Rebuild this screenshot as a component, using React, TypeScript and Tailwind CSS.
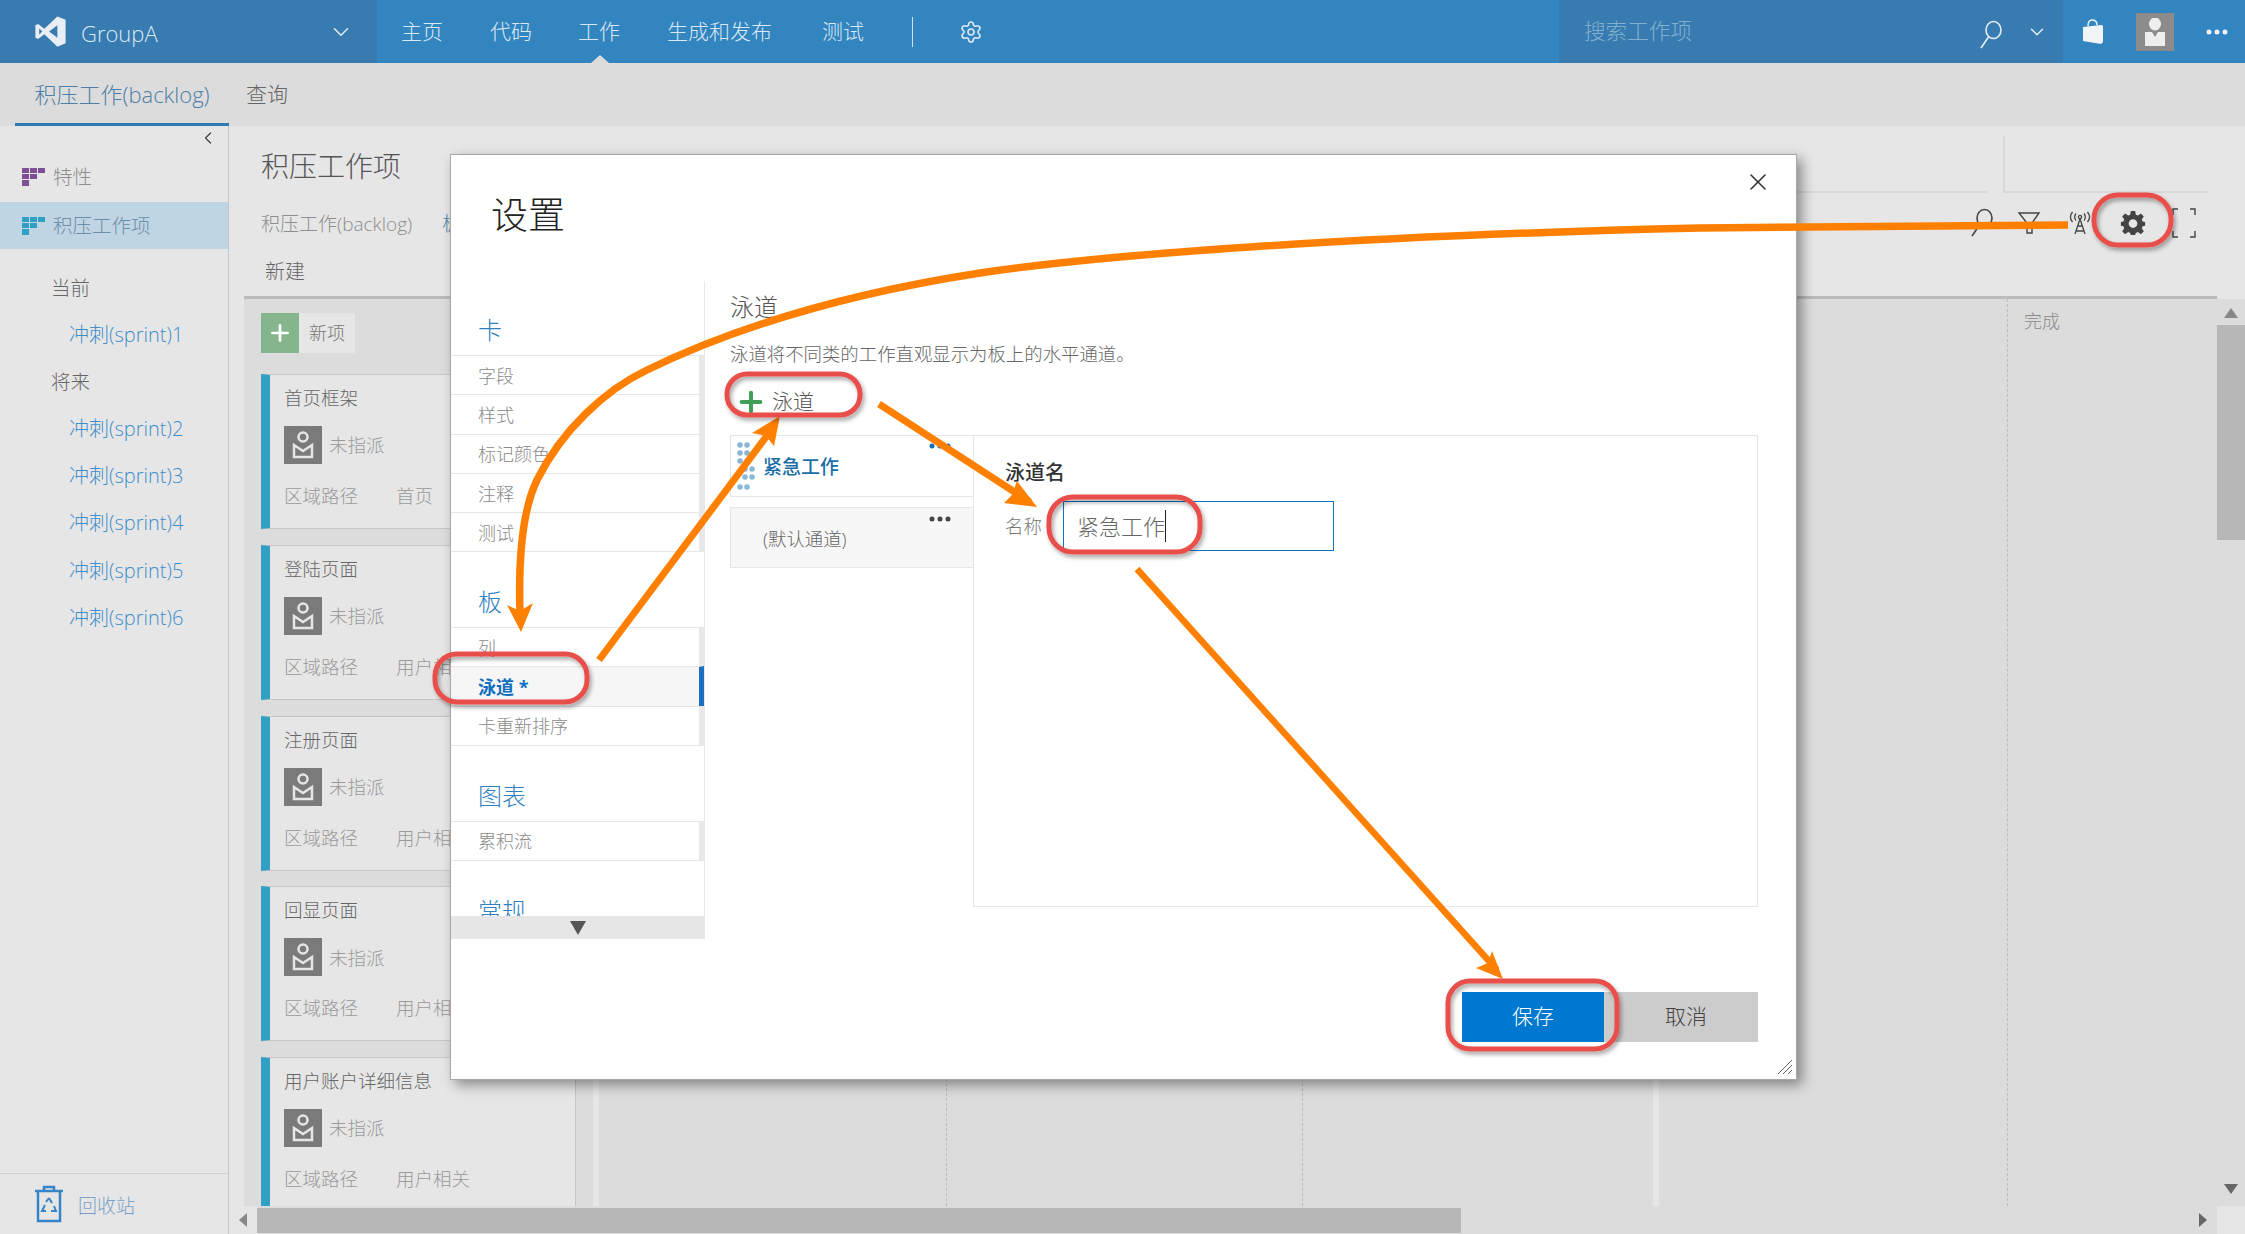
import React from 'react';
import { ChevronDown, ChevronLeft, Settings, Plus, X } from 'lucide-react';

const sprints = ['冲刺(sprint)2', '冲刺(sprint)3', '冲刺(sprint)4', '冲刺(sprint)5', '冲刺(sprint)6'];

const cards = [
  { title: '首页框架', area: '首页' },
  { title: '登陆页面', area: '用户相关' },
  { title: '注册页面', area: '用户相关' },
  { title: '回显页面', area: '用户相关' },
  { title: '用户账户详细信息', area: '用户相关' },
];

const BacklogIcon = ({ color }: { color: string }) => (
  <svg width="24" height="18" viewBox="0 0 24 18" fill={color}>
    <rect x="0" y="0" width="7" height="5" />
    <rect x="8" y="0" width="7" height="5" />
    <rect x="16" y="0" width="7" height="5" />
    <rect x="0" y="6" width="7" height="5" />
    <rect x="8" y="6" width="7" height="5" />
    <rect x="0" y="12" width="7" height="6" />
  </svg>
);

const Dots = ({ color = '#444' }: { color?: string }) => (
  <svg width="22" height="6" viewBox="0 0 22 6" fill={color}>
    <circle cx="3" cy="3" r="2.5" />
    <circle cx="11" cy="3" r="2.5" />
    <circle cx="19" cy="3" r="2.5" />
  </svg>
);

// tall narrow magnifier, ring on top right and handle going down left
const SearchGlyph = ({ color }: { color: string }) => (
  <svg width="24" height="30" viewBox="0 0 24 30" fill="none" stroke={color} strokeWidth="1.6">
    <ellipse cx="14.5" cy="10" rx="7.5" ry="8.5" />
    <path d="M9.5 17 L2 28" />
  </svg>
);

const AntennaGlyph = () => (
  <svg width="22" height="24" viewBox="0 0 22 24" fill="none" stroke="#444" strokeWidth="1.3">
    <circle cx="11" cy="6" r="1.6" />
    <path d="M11 8 L6 23 M11 8 L16 23 M8.5 15 H13.5 M7 20 H15" />
    <path d="M7 2.5 C5.5 4.5 5.5 7.5 7 9.5 M15 2.5 C16.5 4.5 16.5 7.5 15 9.5" />
    <path d="M3.5 1 C1 4 1 8 3.5 11 M18.5 1 C21 4 21 8 18.5 11" />
  </svg>
);

const Card = ({ title, area }: { title: string; area: string }) => (
  <div className="h-[155px] shrink-0 bg-[#e6e6e6] border-l-[9px] border-l-[#30a0c4] border-y border-y-[#c6c6c6] border-r border-r-[#c6c6c6] pl-[14px] pt-[9px]">
    <div className="text-[18.5px] leading-[28px] text-[#666]">{title}</div>
    <div className="flex items-center mt-[14px] gap-[7px]">
      <div className="w-[38px] h-[38px] bg-[#7a7a7a] flex items-center justify-center">
        <svg width="22" height="30" viewBox="0 0 22 30" fill="none" stroke="#e6e6e6" strokeWidth="2.5">
          <circle cx="11" cy="7" r="4.5" />
          <path d="M2 15 L11 21 L20 15 V27 H2 Z" />
        </svg>
      </div>
      <span className="text-[18.5px] text-[#9a9a9a]">未指派</span>
    </div>
    <div className="flex mt-[18px] text-[18.5px] leading-[28px] text-[#9a9a9a]">
      <span className="w-[112px]">区域路径</span>
      <span>{area}</span>
    </div>
  </div>
);

const NavHeading = ({ children, first }: { children: React.ReactNode; first?: boolean }) => (
  <div className={first ? 'h-[74px] flex items-end pb-[10px] pl-[27px] text-[24px] leading-[30px] text-[#2f80bd]' : 'h-[75px] flex items-end pb-[10px] pl-[27px] text-[24px] leading-[30px] text-[#2f80bd]'}>{children}</div>
);

const NavRow = ({ label, active, last }: { label: string; active?: boolean; last?: boolean }) => (
  <div
    className={
      active
        ? 'h-[39.3px] flex items-center pl-[27px] pt-[2px] text-[18px] font-bold text-[#106ebe] bg-[#f6f6f6] border-t border-t-[#e6e6e6] border-r-[5px] border-r-[#1b6ec2]'
        : last
          ? 'h-[40px] flex items-center pl-[27px] pt-[2px] text-[18px] text-[#8a8a8a] border-y border-y-[#e6e6e6] border-r-[5px] border-r-[#e8e8e8]'
          : 'h-[39.3px] flex items-center pl-[27px] pt-[2px] text-[18px] text-[#8a8a8a] border-t border-t-[#e6e6e6] border-r-[5px] border-r-[#e8e8e8]'
    }
  >
    {label}
  </div>
);

const Annotations = () => (
  <svg className="absolute left-0 top-0 pointer-events-none" width="2245" height="1234" viewBox="0 0 2245 1234" fill="none">
    <defs>
      <filter id="ringShadow" x="-20%" y="-20%" width="140%" height="150%">
        <feDropShadow dx="2" dy="3" stdDeviation="2" floodColor="#000" floodOpacity="0.35" />
      </filter>
    </defs>
    <g stroke="#ff8000" strokeLinecap="butt">
      <path
        d="M2068 225 L1700 228 C1350 236 1100 255 980 273 C870 290 750 320 647 370 C605 390 562 430 537 480 C525 505 518 550 520 613"
        strokeWidth="7.5"
      />
      <path d="M599 660 L775 425" strokeWidth="7" />
      <path d="M879 404 L1030 502" strokeWidth="7" />
      <path d="M1137 569 L1497 970" strokeWidth="6.5" />
    </g>
    <g fill="#ff8000">
      <polygon points="521,632 507,605 520,611 533,603" />
      <polygon points="780,416 774,446 766,436 752,433" />
      <polygon points="1037,507 1004,503 1012,495 1017,481" />
      <polygon points="1503,979 1476,968 1488,963 1492,951" />
    </g>
    <g stroke="#e8504c" strokeWidth="5" filter="url(#ringShadow)">
      <rect x="2094" y="195" width="77" height="50" rx="24" />
      <rect x="435" y="654" width="152" height="48" rx="22" />
      <rect x="727" y="374" width="133" height="41" rx="20" />
      <rect x="1049" y="497" width="151" height="55" rx="24" />
      <rect x="1448" y="981" width="169" height="68" rx="22" />
    </g>
  </svg>
);

const SettingsDialog = () => (
  <div className="absolute left-[450px] top-[154px] w-[1347px] h-[926px] bg-white border border-[#a8a8a8] shadow-[5px_5px_12px_rgba(0,0,0,0.4)]">
    <div className="h-[126px] pl-[40px] pt-[35px] text-[37px] leading-[50px] text-[#222]">设置</div>
    <button className="absolute right-[24px] top-[13px] text-[#333]">
      <X size={28} strokeWidth={1.3} />
    </button>
    <div className="flex items-start">
      <div className="w-[254px] shrink-0 border-r border-r-[#e8e8e8]">
        <div className="h-[635px] overflow-hidden">
          <NavHeading first>卡</NavHeading>
          <NavRow label="字段" />
          <NavRow label="样式" />
          <NavRow label="标记颜色" />
          <NavRow label="注释" />
          <NavRow label="测试" last />
          <NavHeading>板</NavHeading>
          <NavRow label="列" />
          <NavRow label="泳道 *" active />
          <NavRow label="卡重新排序" last />
          <NavHeading>图表</NavHeading>
          <NavRow label="累积流" last />
          <NavHeading>常规</NavHeading>
        </div>
        <div className="h-[23px] bg-[#e6e6e6] flex justify-center items-center">
          <svg width="16" height="14" viewBox="0 0 16 14" fill="#555">
            <polygon points="0,0 16,0 8,14" />
          </svg>
        </div>
      </div>
      <div className="flex-1 pl-[25px] pr-[38px]">
        <div className="pt-[11px] text-[24px] leading-[30px] text-[#555]">泳道</div>
        <div className="mt-[20px] text-[18.4px] leading-[24px] text-[#666]">泳道将不同类的工作直观显示为板上的水平通道。</div>
        <div className="mt-[21px] h-[30px] flex items-center pl-[5px] gap-[5px] text-[21px] text-[#555]">
          <Plus size={32} strokeWidth={3} className="text-[#3f9e58]" />
          泳道
        </div>
        <div className="mt-[18px] flex">
          <div className="w-[243px] shrink-0">
            <div className="relative h-[62px] border-y border-l border-[#e6e6e6] flex items-center pl-[32px] pt-[3px] text-[19px] font-medium text-[#1a6ea8]">
              <svg className="absolute left-[6px] top-[6px]" width="18" height="50" viewBox="0 0 18 50" fill="#8ab8d8">
                <circle cx="3" cy="3" r="2.8" /><circle cx="10" cy="3" r="2.8" />
                <circle cx="3" cy="11" r="2.8" /><circle cx="10" cy="11" r="2.8" />
                <circle cx="3" cy="19" r="2.8" /><circle cx="10" cy="19" r="2.8" />
                <circle cx="8" cy="27" r="2.8" /><circle cx="15" cy="27" r="2.8" />
                <circle cx="8" cy="35" r="2.8" /><circle cx="15" cy="35" r="2.8" />
                <circle cx="3" cy="45" r="2.8" /><circle cx="10" cy="45" r="2.8" />
              </svg>
              紧急工作
              <span className="absolute right-[22px] top-[7px]"><Dots color="#106ebe" /></span>
            </div>
            <div className="relative mt-[10px] h-[61px] bg-[#f7f7f7] border-y border-l border-[#e6e6e6] flex items-center pl-[32px] pt-[2px] text-[18.4px] text-[#666]">
              (默认通道)
              <span className="absolute right-[22px] top-[8px]"><Dots /></span>
            </div>
          </div>
          <div className="w-[785px] h-[472px] border border-[#e6e6e6] pl-[31px] pt-[22px]">
            <div className="text-[20px] leading-[30px] font-medium text-[#333]">泳道名</div>
            <div className="mt-[13px] flex items-center">
              <span className="w-[58px] text-[18.4px] text-[#777]">名称</span>
              <div className="w-[271px] h-[50px] border border-[#0f74bd] pl-[13px] flex items-center text-[22px] text-[#666]">
                紧急工作
                <span className="w-px h-[32px] bg-[#222]" />
              </div>
            </div>
          </div>
        </div>
        <div className="mt-[85px] flex justify-end">
          <button className="w-[142px] h-[50px] bg-[#0078d0] text-white text-[21px]">保存</button>
          <button className="w-[154px] h-[50px] pl-[10px] bg-[#cccccc] text-[#444] text-[21px]">取消</button>
        </div>
      </div>
    </div>
    <svg className="absolute right-[3px] bottom-[4px]" width="16" height="16" viewBox="0 0 16 16" stroke="#666" strokeWidth="1">
      <path d="M1 15 L15 1 M6 15 L15 6 M11 15 L15 11" />
    </svg>
  </div>
);

export default function App() {
  return (
    <div className="relative w-[2245px] h-[1234px] overflow-hidden bg-[#e6e6e6] font-light font-['Open_Sans','Noto_Sans_CJK_SC',sans-serif]">
      {/* Top bar */}
      <div className="h-[63px] flex bg-[#3385c0] text-[#dbe9f4]">
        <div className="w-[377px] shrink-0 bg-[#377bb0] flex items-center pl-[34px]">
          <svg width="33" height="33" viewBox="0 0 24 24" fill="#e8eef3">
            <path d="M17 1 L23 3.5 V20.5 L17 23 L7.5 14 L3 17.5 L1 16.5 V7.5 L3 6.5 L7.5 10 Z M17 7.5 L11 12 L17 16.5 Z M3.8 9.8 V14.2 L6 12 Z" fillRule="evenodd" />
          </svg>
          <span className="ml-[14px] pt-[3px] text-[22px]">GroupA</span>
          <ChevronDown size={26} strokeWidth={1.5} className="ml-auto mr-[23px]" />
        </div>
        <nav className="flex items-center pl-[24px] text-[21px]">
          <span className="w-[89px]">主页</span>
          <span className="w-[88px]">代码</span>
          <span className="relative w-[89px] h-full flex items-center">
            工作
            <span className="absolute left-[13px] bottom-0 w-0 h-0 border-x-[9px] border-x-transparent border-b-[8px] border-b-[#dcdcdc]" />
          </span>
          <span className="w-[155px]">生成和发布</span>
          <span className="w-[90px]">测试</span>
          <span className="w-px h-[30px] bg-[#cfe2f0]" />
          <Settings size={24} strokeWidth={1.6} className="ml-[46px]" />
        </nav>
        <div className="ml-auto w-[504px] bg-[#377bb0] flex items-center pl-[25px] text-[21.6px] text-[#84b0cf]">
          搜索工作项
          <span className="ml-auto pt-[6px]"><SearchGlyph color="#e8eef3" /></span>
          <ChevronDown size={22} strokeWidth={1.6} className="ml-[23px] mr-[15px] text-[#e8eef3]" />
        </div>
        <div className="w-[182px] flex items-center pl-[18px]">
          <svg width="24" height="26" viewBox="0 0 24 26" fill="#f0f4f7">
            <path d="M2 8 L20 6 C22 6 22 7 22 9 V23 L20 25 L2 22 Z" />
            <path d="M7 7 C7 2 9 1 11 1 C13 1 16 2 16 6" fill="none" stroke="#f0f4f7" strokeWidth="1.5" />
          </svg>
          <div className="ml-[31px] w-[38px] h-[38px] bg-[#8c8c8c] flex justify-center pt-[5px]">
            <svg width="22" height="28" viewBox="0 0 22 28" fill="#eee">
              <ellipse cx="11" cy="6" rx="6" ry="6.5" />
              <path d="M1 14 H8 L11 19 L14 14 H21 V28 H1 Z" />
            </svg>
          </div>
          <span className="ml-[32px]"><Dots color="#f0f4f7" /></span>
        </div>
      </div>

      {/* Sub nav */}
      <div className="h-[63px] flex bg-[#dcdcdc] text-[21px]">
        <div className="ml-[15px] w-[214px] h-full pt-[3px] border-b-[3px] border-b-[#2d7ab0] flex items-center justify-center text-[22px] text-[#4d7fa8]">
          积压工作(backlog)
        </div>
        <div className="ml-[17px] flex items-center text-[#666]">查询</div>
      </div>

      <div className="flex h-[1108px]">
        {/* Left rail */}
        <aside className="w-[229px] shrink-0 border-r border-r-[#c6c6c6] flex flex-col">
          <div className="h-[24px] flex justify-end items-center pr-[10px] text-[#444]">
            <ChevronLeft size={20} strokeWidth={1.5} />
          </div>
          <div className="mt-[2px] h-[50px] flex items-center pl-[22px] gap-[7px] text-[19.5px] text-[#8e8e8e]">
            <BacklogIcon color="#7d4f94" />
            特性
          </div>
          <div className="h-[47px] flex items-center pl-[22px] gap-[7px] text-[19.5px] text-[#6b8eaa] bg-[#c0d5e3]">
            <BacklogIcon color="#2f9fc4" />
            积压工作项
          </div>
          <div className="mt-[15px] h-[47px] flex items-center pl-[51px] text-[19.5px] text-[#666]">当前</div>
          <div className="h-[47px] flex items-center pl-[69px] text-[20px] text-[#3f8ecb]">冲刺(sprint)1</div>
          <div className="h-[47px] flex items-center pl-[51px] text-[19.5px] text-[#666]">将来</div>
          {sprints.map((s) => (
            <div key={s} className="h-[47.3px] flex items-center pl-[69px] text-[20px] text-[#3f8ecb]">{s}</div>
          ))}
          <div className="mt-auto h-[61px] border-t border-t-[#d0d0d0] flex items-center pl-[34px] gap-[14px] text-[19px] text-[#7a9fc8]">
            <svg width="30" height="38" viewBox="0 0 30 38" fill="none" stroke="#3585c8" strokeWidth="2.5">
              <path d="M1 6 H29 M10 6 V2 H20 V6 M4 6 V36 H26 V6" />
              <path d="M15 13 L18 18 M20 21 L22 26 H17 M12 26 H8 L11 20 M12 17 L15 13" strokeWidth="2" />
            </svg>
            <span className="pt-[4px]">回收站</span>
          </div>
        </aside>

        <main className="flex-1 flex flex-col min-w-0">
          {/* Page header */}
          <div className="relative h-[170px] pl-[32px] pt-[22px] shrink-0">
            <div className="text-[28px] leading-[36px] text-[#555]">积压工作项</div>
            <div className="mt-[27px] flex text-[19px] leading-[26px] text-[#8e8e8e]">
              积压工作(backlog)
              <span className="ml-[30px] text-[#4d7fa8]">板</span>
            </div>
            <div className="mt-[22px] pl-[4px] text-[20px] leading-[26px] text-[#666]">新建</div>
            <div className="absolute left-[1774px] top-[10px] w-[205px] h-[57px] border-l-2 border-b-2 border-[#d8d8d8]" />
            <div className="absolute left-[1500px] top-[65px] w-[258px] h-[2px] bg-[#d8d8d8]" />
            <div className="absolute left-[1741px] top-[82px] flex items-center text-[#444]">
              <SearchGlyph color="#444" />
              <svg className="ml-[23px]" width="24" height="24" viewBox="0 0 24 24" fill="none" stroke="#444" strokeWidth="1.4">
                <path d="M2 2 H22 L15 12 V22 H10 V12 Z" />
              </svg>
              <span className="ml-[28px]"><AntennaGlyph /></span>
              <svg className="ml-[29px]" width="26" height="26" viewBox="0 0 24 24" fill="#444">
                <path d="M10 1 H14 L14.6 4.3 L16.5 5.1 L19.3 3.2 L22 6 L20.1 8.7 L20.9 10.6 L23.2 11 V14.6 L20.9 15 L20.1 16.9 L22 19.6 L19.3 22.3 L16.5 20.4 L14.6 21.2 L14 23 H10 L9.4 21.2 L7.5 20.4 L4.7 22.3 L2 19.6 L3.9 16.9 L3.1 15 L0.8 14.6 V11 L3.1 10.6 L3.9 8.7 L2 6 L4.7 3.2 L7.5 5.1 L9.4 4.3 Z M12 8.5 A4 4 0 1 0 12 16.5 A4 4 0 1 0 12 8.5 Z" fillRule="evenodd" />
              </svg>
              <svg className="ml-[26px]" width="24" height="30" viewBox="0 0 24 30" fill="none" stroke="#444" strokeWidth="1.4">
                <path d="M6 1 H1 V7 M18 1 H23 V7 M1 23 V29 H6 M23 23 V29 H18" />
              </svg>
            </div>
          </div>

          <div className="flex-1 flex min-h-0">
            {/* Board */}
            <div className="ml-[15px] flex-1 flex bg-[#dcdcdc] border-t-[3px] border-t-[#bbbbbb] min-w-0 overflow-hidden">
              <div className="w-[332px] shrink-0 pl-[17px] pt-[14px] flex flex-col">
                <div className="w-[94px] h-[40px] shrink-0 flex bg-[#e6e6e6]">
                  <div className="w-[38px] bg-[#84b58c] flex items-center justify-center text-white">
                    <Plus size={26} strokeWidth={2.5} />
                  </div>
                  <span className="pl-[10px] text-[18px] leading-[40px] text-[#777]">新项</span>
                </div>
                <div className="mt-[21px] flex flex-col gap-[15.8px]">
                  {cards.map((c) => (
                    <Card key={c.title} title={c.title} area={c.area} />
                  ))}
                </div>
              </div>
              <div className="w-[17px] shrink-0" />
              <div className="w-[6px] shrink-0 bg-[#e6e6e6]" />
              <div className="w-[348px] shrink-0 border-r border-dashed border-r-[#bdbdbd]" />
              <div className="w-[356px] shrink-0 border-r border-dashed border-r-[#bdbdbd]" />
              <div className="w-[350px] shrink-0" />
              <div className="w-[6px] shrink-0 bg-[#e6e6e6]" />
              <div className="w-[349px] shrink-0 border-r border-dashed border-r-[#bdbdbd]" />
              <div className="flex-1 pl-[16px] pt-[9px] text-[18px] leading-[26px] text-[#8a8a8a]">完成</div>
            </div>
            {/* Vertical scrollbar */}
            <div className="w-[28px] shrink-0 bg-[#dcdcdc] border-t-[3px] border-t-[#e6e6e6] flex flex-col items-center">
              <svg className="mt-[9px]" width="14" height="10" viewBox="0 0 14 10" fill="#888"><polygon points="7,0 14,10 0,10" /></svg>
              <div className="mt-[7px] w-full h-[215px] bg-[#b7b7b7]" />
              <svg className="mt-auto mb-[12px]" width="14" height="10" viewBox="0 0 14 10" fill="#666"><polygon points="0,0 14,0 7,10" /></svg>
            </div>
          </div>

          {/* Horizontal scrollbar */}
          <div className="h-[28px] shrink-0 flex items-center bg-[#dcdcdc]">
            <div className="w-[28px] h-full bg-[#e6e6e6] flex items-center justify-center">
              <svg width="8" height="14" viewBox="0 0 8 14" fill="#888"><polygon points="8,0 8,14 0,7" /></svg>
            </div>
            <div className="w-[1204px] h-[25px] bg-[#b7b7b7]" />
            <svg className="ml-auto mr-[10px]" width="8" height="14" viewBox="0 0 8 14" fill="#666"><polygon points="0,0 8,7 0,14" /></svg>
            <div className="w-[28px] h-full bg-[#e6e6e6]" />
          </div>
        </main>
      </div>

      <SettingsDialog />
      <Annotations />
    </div>
  );
}
